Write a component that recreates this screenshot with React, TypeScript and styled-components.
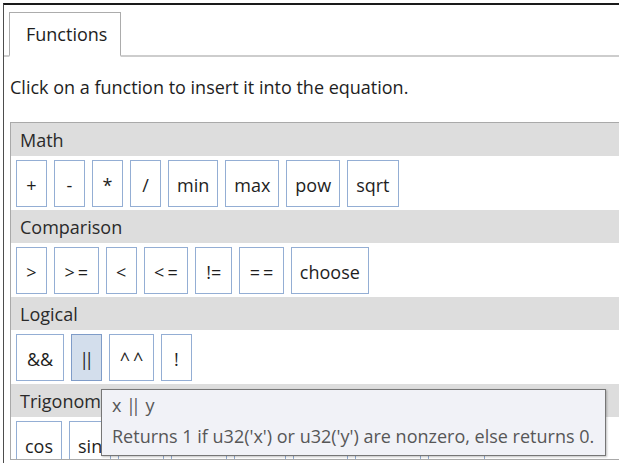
import React from 'react';
import styled, { createGlobalStyle } from 'styled-components';

const GlobalStyle = createGlobalStyle`
  html, body {
    margin: 0;
    padding: 0;
    background: #ffffff;
    overflow: hidden;
  }

  body {
    font-family: 'Open Sans', 'Noto Sans', sans-serif;
    font-size: 18px;
    color: #1e1e1e;
  }
`;

// tracking: letter-spacing for operator labels, pad: horizontal padding
interface FunctionItem {
  label: string;
  tracking?: number;
  pad?: number;
}

interface FunctionGroup {
  name: string;
  items: FunctionItem[];
}

const fn = (label: string, tracking = 0, pad = 8): FunctionItem => ({
  label,
  tracking,
  pad,
});

const groups: FunctionGroup[] = [
  {
    name: 'Math',
    items: ['+', '-', '*', '/', 'min', 'max', 'pow', 'sqrt'].map((l) => fn(l)),
  },
  {
    name: 'Comparison',
    items: [
      fn('>'),
      fn('>=', 3),
      fn('<'),
      fn('<=', 3),
      fn('!=', 0, 10),
      fn('==', 3),
      fn('choose'),
    ],
  },
  {
    name: 'Logical',
    items: [fn('&&', 0, 10), fn('||', -5), fn('^^', 3), fn('!')],
  },
  {
    name: 'Trigonometry',
    items: ['cos', 'sin', 'tan', 'acos', 'asin', 'atan', 'atan2', 'cosh'].map(
      (l) => fn(l),
    ),
  },
];

const hovered = '||';

const Window = styled.div`
  position: relative;
  width: 700px;
  height: 466px;
  padding: 3px 0 0 3px;
  box-sizing: border-box;
`;

const Frame = styled.div`
  height: 460px;
  border-top: 2px solid #1a1a1a;
  border-left: 1px solid #4d4d4d;
  box-sizing: border-box;
`;

const TabStrip = styled.div`
  display: flex;
  padding: 7px 0 0 5px;
  border-bottom: 2px solid #cdcdcd;
`;

const Tab = styled.div`
  width: 112px;
  height: 45px;
  margin-bottom: -2px;
  padding-left: 16px;
  box-sizing: border-box;
  display: flex;
  align-items: center;
  background: #ffffff;
  border: 1px solid #acacac;
  border-bottom: 2px solid #ffffff;
`;

const TabBody = styled.div`
  padding-left: 6px;
`;

const Hint = styled.div`
  height: 65px;
  padding-bottom: 5px;
  box-sizing: border-box;
  display: flex;
  align-items: center;
`;

const Panel = styled.div`
  height: 338px;
  overflow: hidden;
  border: 1px solid #a9a9a9;
  box-sizing: border-box;
  display: flex;
  flex-direction: column;
`;

const GroupHeader = styled.div`
  flex: 0 0 33px;
  display: flex;
  align-items: center;
  padding-left: 9px;
  background: #dddddd;
  color: #2a2a2a;
`;

const ButtonRow = styled.div`
  flex: 0 0 54px;
  display: flex;
  gap: 7px;
  padding: 4px 5px 3px;
  box-sizing: border-box;
  background: #ffffff;
`;

const FunctionButton = styled.div<{
  $active?: boolean;
  $tracking: number;
  $pad: number;
}>`
  min-width: 31px;
  height: 47px;
  padding: 3px ${({ $pad, $tracking }) => $pad - $tracking / 2}px 0
    ${({ $pad, $tracking }) => $pad + $tracking / 2}px;
  box-sizing: border-box;
  display: flex;
  align-items: center;
  justify-content: center;
  border: 1px solid ${({ $active }) => ($active ? '#7f9cc8' : '#94aed4')};
  background: ${({ $active }) => ($active ? '#d3deec' : '#ffffff')};
  color: #1e1e1e;
  letter-spacing: ${({ $tracking }) => $tracking}px;
  white-space: nowrap;
`;

const Tooltip = styled.div`
  position: absolute;
  left: 101px;
  top: 389px;
  width: 505px;
  height: 67px;
  box-sizing: border-box;
  padding: 3px 10px;
  border: 1px solid #767676;
  background: #f1f2f7;
  color: #575757;
  box-shadow: 1px 1px 2px rgba(0, 0, 0, 0.25);
  white-space: nowrap;
`;

const TooltipTitle = styled.div`
  line-height: 24px;
`;

const Pipes = styled.span`
  letter-spacing: -5px;
  margin-right: 5px;
`;

const TooltipText = styled.div`
  margin-top: 7px;
  line-height: 24px;
`;

const App = () => {
  return (
    <Window>
      <GlobalStyle />
      <Frame>
        <TabStrip>
          <Tab>Functions</Tab>
        </TabStrip>

        <TabBody>
          <Hint>Click on a function to insert it into the equation.</Hint>

          <Panel>
            {groups.map((group) => (
              <React.Fragment key={group.name}>
                <GroupHeader>{group.name}</GroupHeader>
                <ButtonRow>
                  {group.items.map((item) => (
                    <FunctionButton
                      key={item.label}
                      $active={item.label === hovered}
                      $tracking={item.tracking ?? 0}
                      $pad={item.pad ?? 8}
                    >
                      {item.label}
                    </FunctionButton>
                  ))}
                </ButtonRow>
              </React.Fragment>
            ))}
          </Panel>
        </TabBody>
      </Frame>

      <Tooltip>
        <TooltipTitle>
          x <Pipes>||</Pipes> y
        </TooltipTitle>
        <TooltipText>
          Returns 1 if u32('x') or u32('y') are nonzero, else returns 0.
        </TooltipText>
      </Tooltip>
    </Window>
  );
};

export default App;
